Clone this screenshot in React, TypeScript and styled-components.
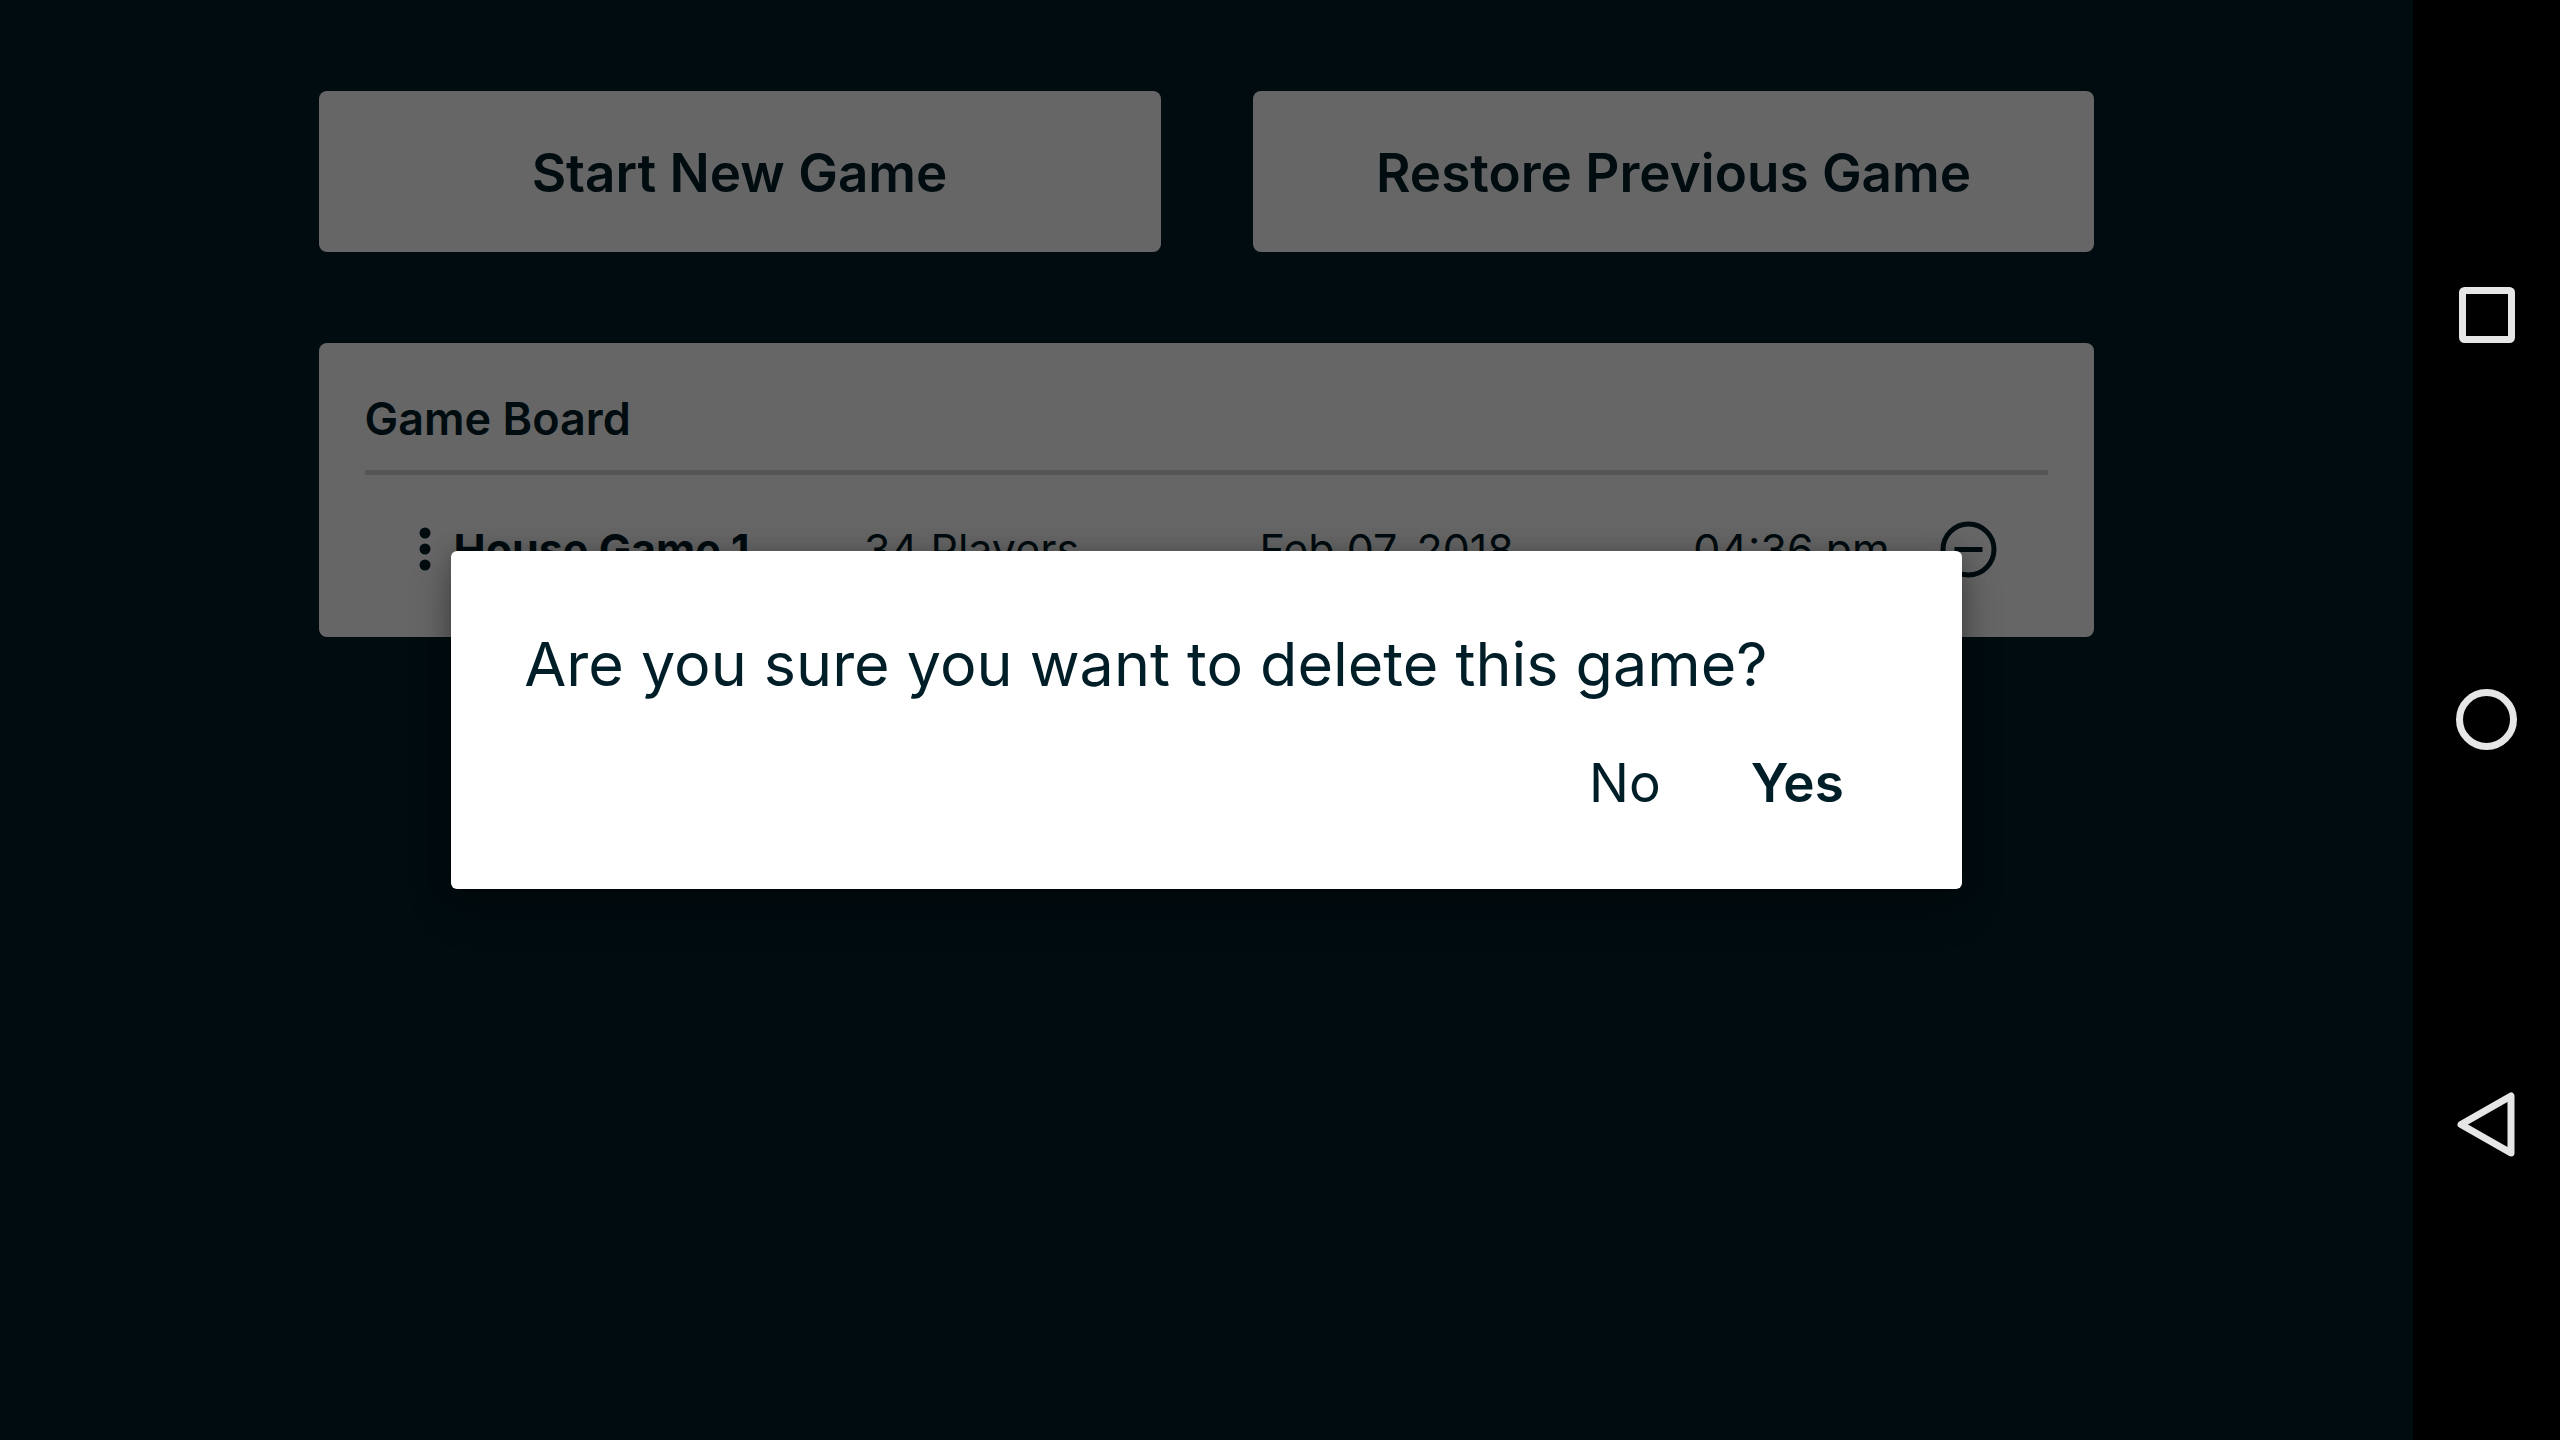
import React from "react";
import styled, { createGlobalStyle } from "styled-components";

const ink = "#001e28";
const paper = "#ffffff";

const GlobalStyle = createGlobalStyle`
  *, *::before, *::after { box-sizing: border-box; }
  body {
    margin: 0;
    background: ${ink};
    color: ${ink};
    font-family: Inter, "Liberation Sans", sans-serif;
  }
  button {
    margin: 0;
    border: 0;
    color: inherit;
    font: inherit;
    cursor: pointer;
  }
  h1, h2, p, ul { margin: 0; padding: 0; }
`;

const Screen = styled.div`
  display: flex;
  min-height: 100vh;
`;

const Stage = styled.div`
  flex: 1;
  min-width: 0;
  display: grid;
`;

const Content = styled.main`
  grid-area: 1 / 1;
  padding: 91px 13.2%;
`;

const Actions = styled.div`
  display: grid;
  grid-template-columns: 1fr 1fr;
  gap: 92px;
  margin-bottom: 91px;
`;

const ActionButton = styled.button`
  height: 161px;
  padding: 2px 0 0;
  border-radius: 8px;
  background: ${paper};
  && {
    font-size: 53px;
    font-weight: 600;
    line-height: 64px;
  }
`;

const Board = styled.section`
  padding: 47px 46px 59px;
  border-radius: 8px;
  background: ${paper};
`;

const BoardTitle = styled.h2`
  padding-bottom: 22px;
  border-bottom: 5px solid #d5d5d5;
  font-size: 45px;
  font-weight: 600;
  line-height: 58px;
`;

const GameList = styled.ul`
  list-style: none;
`;

const GameRow = styled.li`
  display: grid;
  grid-template-columns: 35px 410fr 395fr 433fr 247fr 57px;
  align-items: center;
  height: 58px;
  margin: 45px 51px 0 54px;
  font-size: 43px;
  line-height: 58px;
  white-space: nowrap;
`;

const GameName = styled.span`
  font-weight: 700;
`;

const IconButton = styled.button`
  display: flex;
  padding: 0;
  background: none;
`;

const Backdrop = styled.div`
  grid-area: 1 / 1;
  z-index: 1;
  display: flex;
  align-items: center;
  padding: 0 18.7%;
  background: rgba(0, 0, 0, 0.6);
`;

const Dialog = styled.div`
  flex: 1;
  padding: 75px 73px;
  border-radius: 6px;
  background: ${paper};
  box-shadow: 0 20px 40px rgba(0, 0, 0, 0.3), 0 0 24px rgba(0, 0, 0, 0.2);
`;

const Question = styled.h1`
  font-size: 61px;
  font-weight: 400;
  line-height: 76px;
`;

const Choices = styled.div`
  display: flex;
  justify-content: flex-end;
  margin-top: 48px;
`;

const Choice = styled.button<{ $strong?: boolean }>`
  padding: 2px 45px 0;
  background: none;
  && {
    height: 64px;
    font-size: 53px;
    font-weight: ${(p) => (p.$strong ? 600 : 400)};
    line-height: 62px;
  }
`;

const SystemBar = styled.nav`
  flex: none;
  display: flex;
  flex-direction: column;
  align-items: center;
  justify-content: center;
  gap: 341px;
  width: 147px;
  background: #000000;
`;

const SystemIcon = styled.svg`
  width: 64px;
  height: 64px;
  overflow: visible;
  fill: none;
  stroke: #e6e6e6;
  stroke-width: 7;
  stroke-linejoin: round;
`;

const games = [
  { name: "House Game 1", players: "34 Players", date: "Feb 07, 2018", time: "04:36 pm" },
];

export default function App() {
  return (
    <>
      <GlobalStyle />
      <Screen>
        <Stage>
          <Content>
            <Actions>
              <ActionButton type="button">Start New Game</ActionButton>
              <ActionButton type="button">Restore Previous Game</ActionButton>
            </Actions>
            <Board>
              <BoardTitle>Game Board</BoardTitle>
              <GameList>
                {games.map((game) => (
                  <GameRow key={game.name}>
                    <IconButton type="button" aria-label="Game options">
                      <svg width="12" height="44" viewBox="0 0 12 44" fill={ink}>
                        <circle cx="6" cy="6" r="5.5" />
                        <circle cx="6" cy="22" r="5.5" />
                        <circle cx="6" cy="38" r="5.5" />
                      </svg>
                    </IconButton>
                    <GameName>{game.name}</GameName>
                    <span>{game.players}</span>
                    <span>{game.date}</span>
                    <span>{game.time}</span>
                    <IconButton type="button" aria-label="Delete game">
                      <svg width="57" height="57" viewBox="0 0 57 57" fill="none" stroke={ink} strokeWidth="5">
                        <circle cx="28.5" cy="28.5" r="25.5" />
                        <path d="M14.5 28.5H42.5" />
                      </svg>
                    </IconButton>
                  </GameRow>
                ))}
              </GameList>
            </Board>
          </Content>
          <Backdrop>
            <Dialog role="dialog" aria-modal="true" aria-labelledby="question">
              <Question id="question">Are you sure you want to delete this game?</Question>
              <Choices>
                <Choice type="button">No</Choice>
                <Choice type="button" $strong>Yes</Choice>
              </Choices>
            </Dialog>
          </Backdrop>
        </Stage>
        <SystemBar aria-label="System">
          <IconButton type="button" aria-label="Recent apps">
            <SystemIcon viewBox="0 0 64 64">
              <rect x="7.5" y="7.5" width="49" height="49" rx="2" />
            </SystemIcon>
          </IconButton>
          <IconButton type="button" aria-label="Home">
            <SystemIcon viewBox="0 0 64 64">
              <circle cx="31.5" cy="31.5" r="27" />
            </SystemIcon>
          </IconButton>
          <IconButton type="button" aria-label="Back">
            <SystemIcon viewBox="0 0 64 64">
              <path d="M6 31.5L56 3V60Z" />
            </SystemIcon>
          </IconButton>
        </SystemBar>
      </Screen>
    </>
  );
}
